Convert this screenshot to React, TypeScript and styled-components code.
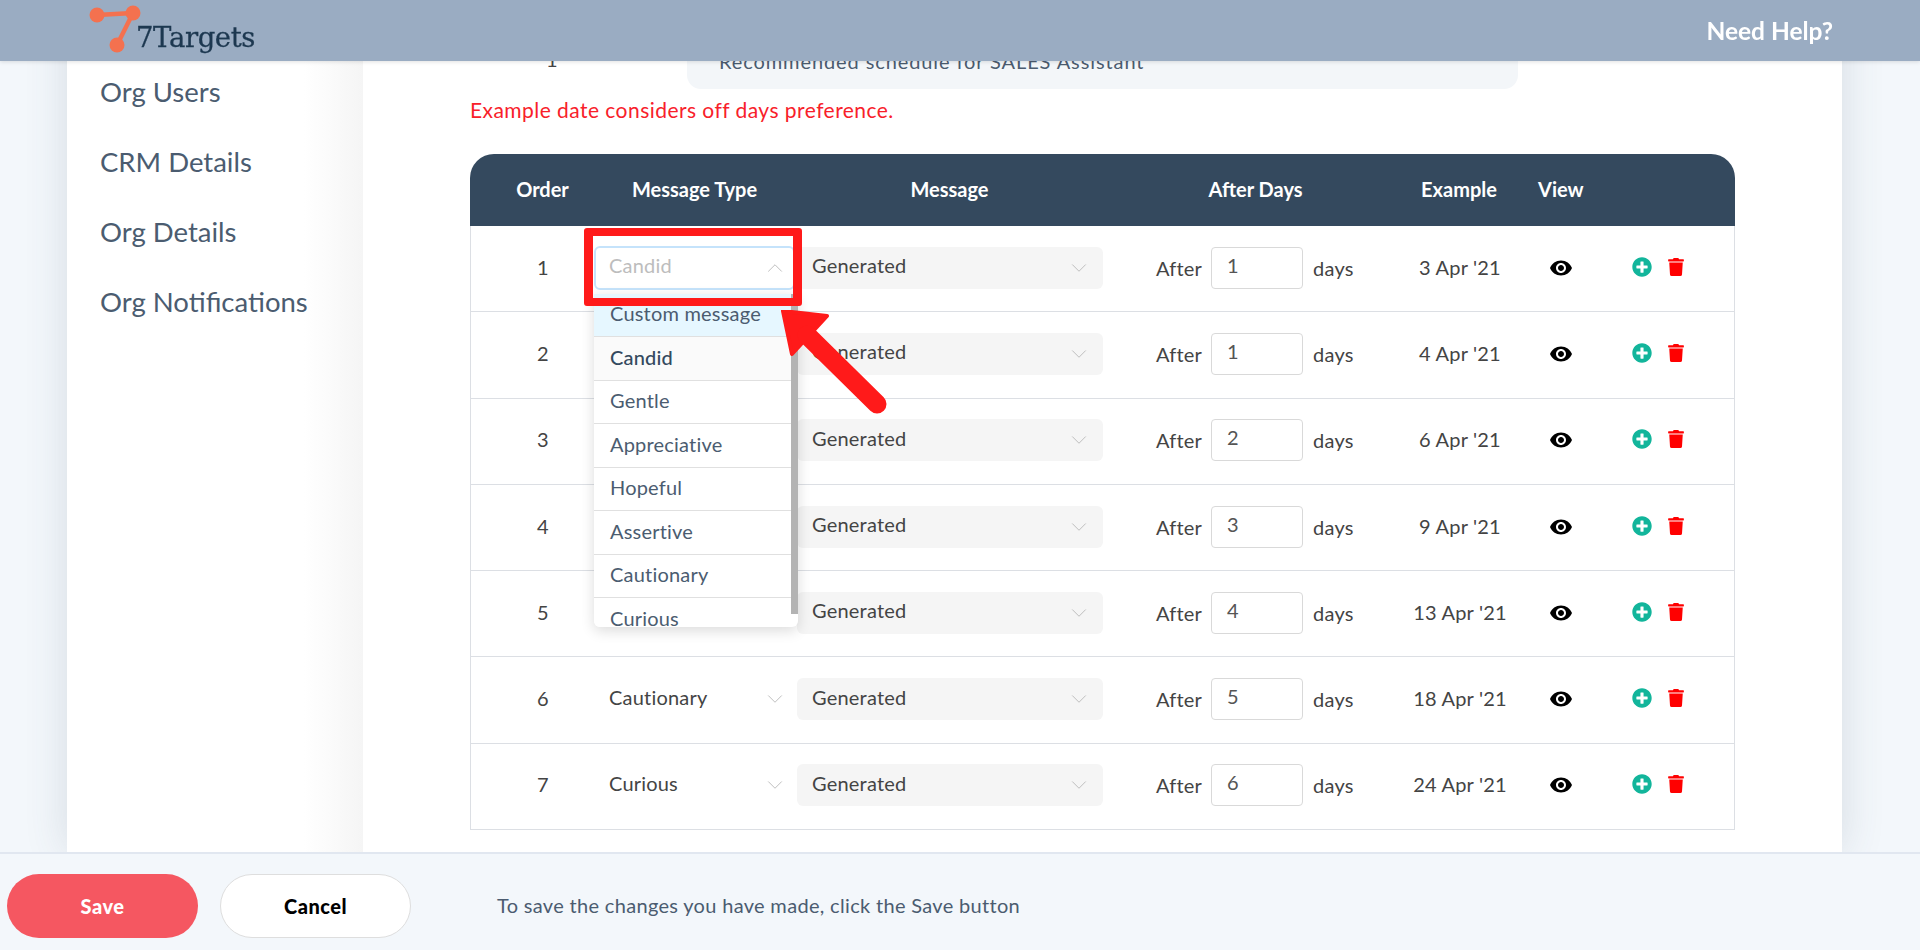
import { createGlobalStyle, styled } from 'styled-components';
import { FaPlusCircle, FaTrash } from 'react-icons/fa';
import { MdRemoveRedEye } from 'react-icons/md';
import { LuChevronDown, LuChevronUp } from 'react-icons/lu';

const GlobalStyle = createGlobalStyle`
  html, body {
    margin: 0;
    height: 950px;
    overflow: hidden;
    background: #f3f7fb;
    font-family: 'Lato', 'Liberation Sans', sans-serif;
  }
  * {
    box-sizing: border-box;
  }
`;

const ROWS = [
  { order: 1, type: 'Candid', after: 1, example: "3 Apr '21" },
  { order: 2, type: 'Gentle', after: 1, example: "4 Apr '21" },
  { order: 3, type: 'Appreciative', after: 2, example: "6 Apr '21" },
  { order: 4, type: 'Hopeful', after: 3, example: "9 Apr '21" },
  { order: 5, type: 'Assertive', after: 4, example: "13 Apr '21" },
  { order: 6, type: 'Cautionary', after: 5, example: "18 Apr '21" },
  { order: 7, type: 'Curious', after: 6, example: "24 Apr '21" },
];

const OPTIONS = ['Custom message', 'Candid', 'Gentle', 'Appreciative', 'Hopeful', 'Assertive', 'Cautionary', 'Curious'];

function Logo() {
  return (
    <LogoWrap>
      <svg width="60" height="61" viewBox="0 0 60 61">
        <g stroke="#f4714f" strokeWidth="4.5" fill="#f4714f">
          <line x1="9" y1="15" x2="45" y2="13" />
          <line x1="45" y1="13" x2="29" y2="45" />
          <circle cx="9" cy="15" r="7.5" stroke="none" />
          <circle cx="45" cy="13" r="7.5" stroke="none" />
          <circle cx="29" cy="45" r="7.5" stroke="none" />
        </g>
      </svg>
      <LogoText>7Targets</LogoText>
    </LogoWrap>
  );
}

export default function App() {
  return (
    <>
      <GlobalStyle />
      <Header>
        <Logo />
        <HelpLink>Need Help?</HelpLink>
      </Header>
      <Page>
        <Shell>
          <Sidebar>
            <SideItem>Org Users</SideItem>
            <SideItem>CRM Details</SideItem>
            <SideItem>Org Details</SideItem>
            <SideItem>Org Notifications</SideItem>
          </Sidebar>
          <Main>
            <ScheduleRow>
              <ScheduleIndex>1</ScheduleIndex>
              <ScheduleBox>Recommended schedule for SALES Assistant</ScheduleBox>
            </ScheduleRow>
            <Note>Example date considers off days preference.</Note>
            <Table>
              <HeadRow>
                <HeadOrder>Order</HeadOrder>
                <HeadCell>Message Type</HeadCell>
                <HeadCell>Message</HeadCell>
                <HeadAfter>After Days</HeadAfter>
                <HeadCell>Example</HeadCell>
                <HeadCell>View</HeadCell>
                <span />
              </HeadRow>
              {ROWS.map((row, i) => (
                <Row key={row.order}>
                  <OrderCell>{row.order}</OrderCell>
                  <TypeSelect $open={i === 0}>
                    <SelectLabel $muted={i === 0}>{i === 0 || i >= 5 ? row.type : ''}</SelectLabel>
                    <Chevron>
                      {i === 0 ? <LuChevronUp size={26} strokeWidth={0.8} /> : <LuChevronDown size={26} strokeWidth={0.8} />}
                    </Chevron>
                    {i === 0 && (
                      <Dropdown>
                        {OPTIONS.map((opt) => (
                          <Option key={opt} $active={opt === 'Custom message'} $selected={opt === 'Candid'}>
                            {opt}
                          </Option>
                        ))}
                        <ScrollThumb />
                      </Dropdown>
                    )}
                  </TypeSelect>
                  <MessageSelect>
                    <SelectLabel>Generated</SelectLabel>
                    <Chevron>
                      <LuChevronDown size={26} strokeWidth={0.8} />
                    </Chevron>
                  </MessageSelect>
                  <AfterCell>
                    <AfterLabel>After</AfterLabel>
                    <DaysInput>{row.after}</DaysInput>
                    days
                  </AfterCell>
                  <ExampleCell>{row.example}</ExampleCell>
                  <ViewCell>
                    <MdRemoveRedEye size={24} color="#000" />
                  </ViewCell>
                  <ActionCell>
                    <FaPlusCircle size={20} color="#12b59b" />
                    <FaTrash size={18} color="#ff0000" />
                  </ActionCell>
                </Row>
              ))}
              <Highlight />
              <Arrow width="110" height="105" viewBox="0 0 110 105">
                <path d="M6 1 L50 6 L15 44 Z" fill="#ff1a1a" stroke="#ff1a1a" strokeWidth="4" strokeLinejoin="round" />
                <line x1="30" y1="25" x2="100" y2="94" stroke="#ff1a1a" strokeWidth="19" strokeLinecap="round" />
              </Arrow>
            </Table>
          </Main>
        </Shell>
      </Page>
      <Footer>
        <SaveButton>Save</SaveButton>
        <CancelButton>Cancel</CancelButton>
        <FooterHint>To save the changes you have made, click the Save button</FooterHint>
      </Footer>
    </>
  );
}

const Header = styled.header`
  position: fixed;
  top: 0;
  left: 0;
  right: 0;
  height: 61px;
  z-index: 20;
  display: flex;
  align-items: center;
  justify-content: space-between;
  padding: 0 87px 0 88px;
  background: #9aacc2;
  box-shadow: 0 1px 4px rgba(0, 0, 0, 0.12);
`;

const LogoWrap = styled.div`
  display: flex;
  align-items: flex-start;
  height: 61px;
`;

const LogoText = styled.span`
  margin: 20px 0 0 -12px;
  font-family: 'DejaVu Serif', serif;
  font-size: 27.5px;
  line-height: 34px;
  letter-spacing: -0.4px;
  -webkit-text-stroke: 0.3px #1d3850;
  color: #1d3850;
`;

const HelpLink = styled.a`
  font-size: 24.5px;
  font-weight: 700;
  color: #fff;
`;

const Page = styled.div`
  height: 852px;
  padding: 0 78px 0 67px;
  overflow: hidden;
`;

const Shell = styled.div`
  display: flex;
  height: 100%;
  background: #fff;
  box-shadow: 0 0 40px rgba(60, 80, 100, 0.16);
`;

const Sidebar = styled.nav`
  width: 296px;
  flex: none;
  padding: 71px 0 0 33px;
  background: linear-gradient(90deg, #fff 80%, #f5f5f5 100%);
`;

const SideItem = styled.div`
  height: 70px;
  font-size: 27.5px;
  line-height: 42px;
  color: #4b5c70;
`;

const Main = styled.main`
  flex: 1;
  padding-left: 107px;
`;

const ScheduleRow = styled.div`
  display: flex;
  height: 89px;
`;

const ScheduleIndex = styled.span`
  width: 217px;
  padding: 47px 0 0 76px;
  font-size: 20px;
  color: #444;
`;

const ScheduleBox = styled.div`
  width: 831px;
  height: 89px;
  padding: 49px 0 0 32px;
  border-radius: 0 0 14px 14px;
  background: #f3f6f9;
  font-size: 20px;
  letter-spacing: 0.9px;
  color: #4b5c70;
`;

const Note = styled.p`
  margin: 8px 0 31px;
  font-size: 21px;
  line-height: 26px;
  letter-spacing: 0.45px;
  color: #f8202a;
`;

const Table = styled.section`
  position: relative;
  width: 1265px;
`;

const GRID = '123px 203px 307px 277px 158px 43px 1fr';

const HeadRow = styled.div`
  display: grid;
  grid-template-columns: ${GRID};
  align-items: center;
  height: 72px;
  padding-bottom: 3px;
  border-radius: 24px 24px 0 0;
  background: #34495e;
  color: #fff;
  font-size: 20px;
  font-weight: 700;
`;

const HeadCell = styled.div`
  text-align: center;
  white-space: nowrap;
`;

const HeadOrder = styled(HeadCell)`
  padding-left: 22px;
`;

const HeadAfter = styled(HeadCell)`
  padding-left: 28px;
`;

const Row = styled.div`
  display: grid;
  grid-template-columns: ${GRID};
  align-items: center;
  height: 86.3px;
  padding-bottom: 2px;
  border: 1px solid #dcdfe4;
  border-top: 0;
  font-size: 20px;
  letter-spacing: 0.2px;
  color: #444;
`;

const OrderCell = styled.div`
  padding: 0 0 2px 21px;
  text-align: center;
`;

const TypeSelect = styled.div<{ $open: boolean }>`
  position: relative;
  display: flex;
  align-items: center;
  justify-content: space-between;
  width: 201px;
  height: 44px;
  padding: 0 5px 0 13px;
  border: ${(p) => (p.$open ? '2px solid #c5e3fb' : '2px solid transparent')};
  border-radius: 6px;
  background: #fff;
`;

const MessageSelect = styled.div`
  display: flex;
  align-items: center;
  justify-content: space-between;
  width: 306px;
  height: 42px;
  padding: 0 11px 0 15px;
  border-radius: 6px;
  background: #f5f5f5;
`;

const SelectLabel = styled.span<{ $muted?: boolean }>`
  padding-bottom: 5px;
  color: ${(p) => (p.$muted ? '#bdbdbd' : '#444')};
`;

const Chevron = styled.span`
  display: flex;
  color: #b5b5b5;
`;

const Dropdown = styled.div`
  position: absolute;
  top: 46px;
  left: -2px;
  z-index: 3;
  width: 204px;
  height: 333px;
  overflow: hidden;
  border-radius: 0 0 6px 6px;
  background: #fff;
  box-shadow: 0 4px 14px rgba(0, 0, 0, 0.14);
`;

const Option = styled.div<{ $active: boolean; $selected: boolean }>`
  display: flex;
  align-items: center;
  width: 197px;
  height: 43.5px;
  padding: 0 0 3px 16px;
  border-bottom: 1.5px solid #e0e0e0;
  background: ${(p) => (p.$active ? '#e6f7ff' : p.$selected ? '#fafafa' : '#fff')};
  color: ${(p) => (p.$selected ? '#34495e' : '#4b5c70')};
  font-weight: ${(p) => (p.$selected ? 500 : 400)};
`;

const ScrollThumb = styled.div`
  position: absolute;
  top: 0;
  right: 0;
  width: 7px;
  height: 320px;
  background: #b3b3b3;
`;

const AfterCell = styled.div`
  display: flex;
  align-items: center;
  gap: 10px;
  padding-left: 52px;
`;

const AfterLabel = styled.span`
  margin-right: -1px;
`;

const DaysInput = styled.div`
  width: 92px;
  height: 42px;
  padding: 5px 0 0 15px;
  border: 1px solid #d9d9d9;
  border-radius: 4px;
  color: #555;
`;

const ExampleCell = styled.div`
  padding-bottom: 2px;
  text-align: center;
  white-space: nowrap;
`;

const ViewCell = styled.div`
  display: flex;
  justify-content: center;
`;

const ActionCell = styled.div`
  display: flex;
  align-items: center;
  gap: 15px;
  padding: 0 0 2px 50px;
`;

const Highlight = styled.div`
  position: absolute;
  top: 74px;
  left: 114px;
  z-index: 5;
  width: 218px;
  height: 78px;
  border: solid #ff1a1a;
  border-width: 8px 9px;
  border-radius: 3px;
`;

const Arrow = styled.svg`
  position: absolute;
  top: 156px;
  left: 307px;
  z-index: 6;
`;

const Footer = styled.footer`
  display: flex;
  align-items: center;
  height: 98px;
  padding: 8px 0 0 7px;
  border-top: 2px solid #e1e7f0;
  background: #f3f7fb;
`;

const FooterButton = styled.button`
  width: 191px;
  height: 64px;
  border-radius: 32px;
  font-family: inherit;
  font-size: 20px;
  font-weight: 900;
  letter-spacing: 0.5px;
`;

const SaveButton = styled(FooterButton)`
  border: 0;
  background: #f55761;
  color: #fff;
`;

const CancelButton = styled(FooterButton)`
  margin-left: 22px;
  border: 1px solid #dedede;
  background: #fff;
  color: #000;
`;

const FooterHint = styled.span`
  margin: 0 0 2px 86px;
  font-size: 20px;
  letter-spacing: 0.32px;
  color: #4b5c70;
`;
